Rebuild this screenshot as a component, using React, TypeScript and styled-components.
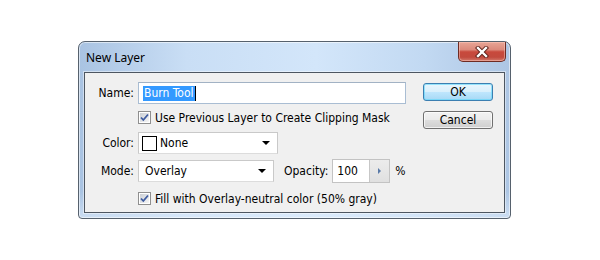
import React from 'react';
import styled, { createGlobalStyle } from 'styled-components';

const GlobalStyle = createGlobalStyle`
  html, body {
    margin: 0;
    background: #ffffff;
  }
  body {
    font-family: Tahoma, "DejaVu Sans Condensed", "DejaVu Sans", sans-serif;
    font-size: 12px;
    color: #000;
  }
`;

const Page = styled.div`
  width: 600px;
  height: 260px;
  padding: 41px 0 0 78px;
  box-sizing: border-box;
`;

const Window = styled.div`
  width: 433px;
  height: 178px;
  box-sizing: border-box;
  border: 1px solid #56616d;
  border-radius: 7px 7px 4px 4px;
  background:
    linear-gradient(to bottom, rgba(255, 255, 255, 0) 85%, rgba(225, 238, 252, 0.6) 100%),
    linear-gradient(to right, #a9c3e2 0%, #c9def5 25%, #d3e6fa 55%, #c2d9f2 80%, #adc6e4 100%);
  box-shadow: inset 0 0 0 1px rgba(255, 255, 255, 0.55);
  display: flex;
  flex-direction: column;
`;

const TitleBar = styled.div`
  height: 30px;
  display: flex;
  justify-content: space-between;
  align-items: flex-start;
`;

const Title = styled.div`
  font-family: "Noto Sans", "Open Sans", sans-serif;
  font-size: 12px;
  line-height: 16px;
  margin: 8px 0 0 7px;
  color: #000;
`;

const CloseButton = styled.div`
  width: 48px;
  height: 20px;
  margin-right: 4px;
  box-sizing: border-box;
  border: 1px solid #6e2b23;
  border-top: none;
  border-radius: 0 0 5px 5px;
  background: linear-gradient(
    to bottom,
    #e8a596 0%,
    #dc8a7c 40%,
    #c8493c 52%,
    #c24a3e 80%,
    #d37a6c 100%
  );
  box-shadow: inset 0 0 0 1px rgba(255, 210, 200, 0.45);
  display: flex;
  align-items: center;
  justify-content: center;
`;

const Panel = styled.div`
  flex: 1;
  margin: 0 5px 5px;
  border: 1px solid #4d5661;
  box-shadow: 0 0 0 1px rgba(255, 255, 255, 0.45);
  background: #f0f0f0;
  display: flex;
`;

const Form = styled.div`
  display: flex;
  flex-direction: column;
  padding-top: 9px;
`;

const Row = styled.div<{ $top?: number; $height: number }>`
  display: flex;
  align-items: center;
  height: ${(p) => p.$height}px;
  margin-top: ${(p) => p.$top ?? 0}px;
`;

const Label = styled.div`
  width: 49px;
  text-align: right;
  margin-right: 4px;
`;

const Indent = styled.div`
  width: 53px;
`;

const TextInput = styled.div`
  width: 268px;
  height: 22px;
  box-sizing: border-box;
  border: 1px solid #a9bdd3;
  border-top-color: #a2b2c4;
  background: #fff;
  display: flex;
  align-items: center;
  padding-left: 4px;
`;

const Selection = styled.span`
  background: #3399ff;
  color: #fff;
  line-height: 15px;
  padding: 0 1px;
  border-right: 1px solid #000;
`;

const Select = styled.div<{ $width: number }>`
  width: ${(p) => p.$width}px;
  height: 22px;
  box-sizing: border-box;
  border: 1px solid #c9c9c9;
  border-bottom-color: #dcdcdc;
  background: #fff;
  display: flex;
  align-items: center;
  padding: 0 7px 0 3px;
`;

const SelectText = styled.span<{ $pad?: number }>`
  flex: 1;
  padding-left: ${(p) => p.$pad ?? 0}px;
`;

const Swatch = styled.span`
  width: 13px;
  height: 13px;
  border: 1px solid #000;
  background: #fff;
  margin-right: 3px;
`;

const Arrow = styled.span`
  width: 0;
  height: 0;
  border-left: 4px solid transparent;
  border-right: 4px solid transparent;
  border-top: 4px solid #000;
`;

const FieldLabel = styled.div<{ $left: number }>`
  margin-left: ${(p) => p.$left}px;
`;

const Spinner = styled.div`
  margin-left: 4px;
  width: 58px;
  height: 24px;
  box-sizing: border-box;
  border: 1px solid #c3c3c3;
  background: #fff;
  display: flex;
`;

const SpinnerValue = styled.div`
  flex: 1;
  display: flex;
  align-items: center;
  padding-left: 4px;
`;

const SpinnerButton = styled.div`
  width: 19px;
  border-left: 1px solid #c7c7c7;
  background: linear-gradient(to bottom, #ececec, #e0e0e0);
  display: flex;
  align-items: center;
  justify-content: center;
`;

const SpinnerArrow = styled.span`
  width: 0;
  height: 0;
  border-top: 3px solid transparent;
  border-bottom: 3px solid transparent;
  border-left: 3px solid #5a7aa8;
`;

const CheckLabel = styled.span`
  margin-left: 4px;
`;

const Buttons = styled.div`
  margin-left: auto;
  padding: 10px 11px 0 0;
  display: flex;
  flex-direction: column;
  gap: 10px;
`;

const DialogButton = styled.div<{ $default?: boolean }>`
  width: 70px;
  height: 18px;
  box-sizing: border-box;
  border: 1px solid ${(p) => (p.$default ? '#3c7fb1' : '#707070')};
  border-radius: 3px;
  background: ${(p) =>
    p.$default
      ? 'linear-gradient(to bottom, #eaf6fd 0%, #d9f0fc 48%, #bee6fd 52%, #a7d9f5 100%)'
      : 'linear-gradient(to bottom, #f2f2f2 0%, #ebebeb 48%, #dddddd 52%, #cfcfcf 100%)'};
  box-shadow: inset 0 0 0 1px ${(p) => (p.$default ? 'rgba(94, 215, 250, 0.6)' : 'rgba(255, 255, 255, 0.7)')};
  display: flex;
  align-items: center;
  justify-content: center;
  font-size: 12px;
`;

const CloseGlyph: React.FC = () => (
  <svg width="16" height="12" viewBox="0 0 16 12">
    <path d="M4 2 L12 10 M12 2 L4 10" stroke="#5c1f18" strokeWidth="4.2" strokeLinecap="square" />
    <path d="M4 2 L12 10 M12 2 L4 10" stroke="#ffffff" strokeWidth="2.4" strokeLinecap="square" />
  </svg>
);

const CheckBox: React.FC = () => (
  <svg width="13" height="13" viewBox="0 0 13 13">
    <defs>
      <linearGradient id="cbg" x1="0" y1="0" x2="1" y2="1">
        <stop offset="0" stopColor="#cbcfd5" />
        <stop offset="1" stopColor="#f6f6f6" />
      </linearGradient>
    </defs>
    <rect x="0.5" y="0.5" width="12" height="12" fill="#fff" stroke="#8f8f8f" />
    <rect x="2" y="2" width="9" height="9" fill="url(#cbg)" />
    <path d="M3 6.5 L5.3 9 L10 3.5" fill="none" stroke="#3d5ba0" strokeWidth="1.8" />
  </svg>
);

export default function App() {
  return (
    <Page>
      <GlobalStyle />
      <Window>
        <TitleBar>
          <Title>New Layer</Title>
          <CloseButton>
            <CloseGlyph />
          </CloseButton>
        </TitleBar>
        <Panel>
          <Form>
            <Row $height={22}>
              <Label>Name:</Label>
              <TextInput>
                <Selection>Burn Tool</Selection>
              </TextInput>
            </Row>
            <Row $height={13} $top={7}>
              <Indent />
              <CheckBox />
              <CheckLabel>Use Previous Layer to Create Clipping Mask</CheckLabel>
            </Row>
            <Row $height={22} $top={8}>
              <Label>Color:</Label>
              <Select $width={140}>
                <Swatch />
                <SelectText>None</SelectText>
                <Arrow />
              </Select>
            </Row>
            <Row $height={22} $top={6}>
              <Label>Mode:</Label>
              <Select $width={136}>
                <SelectText $pad={3}>Overlay</SelectText>
                <Arrow />
              </Select>
              <FieldLabel $left={10}>Opacity:</FieldLabel>
              <Spinner>
                <SpinnerValue>100</SpinnerValue>
                <SpinnerButton>
                  <SpinnerArrow />
                </SpinnerButton>
              </Spinner>
              <FieldLabel $left={5}>%</FieldLabel>
            </Row>
            <Row $height={13} $top={10}>
              <Indent />
              <CheckBox />
              <CheckLabel>Fill with Overlay-neutral color (50% gray)</CheckLabel>
            </Row>
          </Form>
          <Buttons>
            <DialogButton $default>OK</DialogButton>
            <DialogButton>Cancel</DialogButton>
          </Buttons>
        </Panel>
      </Window>
    </Page>
  );
}
